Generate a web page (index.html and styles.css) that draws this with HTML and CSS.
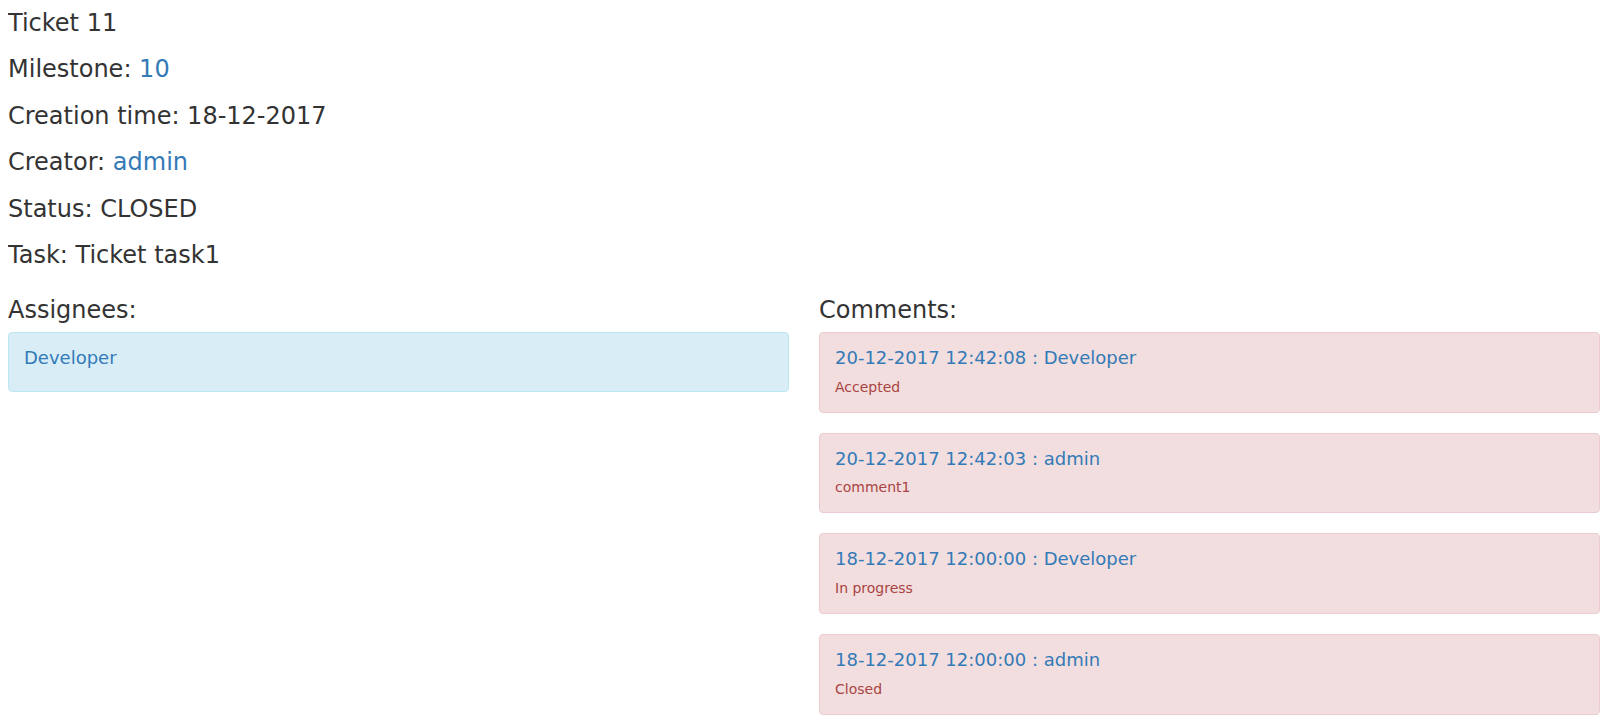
FILE: index.html
```html
<!DOCTYPE html>
<html lang="en">
<head>
<meta charset="utf-8">
<title>Ticket 11</title>
<link rel="stylesheet" href="styles.css">
</head>
<body>
<div class="page">
  <h3 class="field first">Ticket 11</h3>
  <h3 class="field">Milestone: <a href="#">10</a></h3>
  <h3 class="field">Creation time: 18-12-2017</h3>
  <h3 class="field">Creator: <a href="#">admin</a></h3>
  <h3 class="field">Status: CLOSED</h3>
  <h3 class="field">Task: Ticket task1</h3>

  <div class="columns">
    <div class="col">
      <h3 class="field col-title">Assignees:</h3>
      <div class="alert alert-info">
        <h4 class="alert-title assignee"><a href="#">Developer</a></h4>
      </div>
    </div>
    <div class="col">
      <h3 class="field col-title">Comments:</h3>
      <div class="alert alert-danger">
        <h4 class="alert-title"><a href="#">20-12-2017 12:42:08 : Developer</a></h4>
        <div class="alert-body">Accepted</div>
      </div>
      <div class="alert alert-danger">
        <h4 class="alert-title"><a href="#">20-12-2017 12:42:03 : admin</a></h4>
        <div class="alert-body">comment1</div>
      </div>
      <div class="alert alert-danger">
        <h4 class="alert-title"><a href="#">18-12-2017 12:00:00 : Developer</a></h4>
        <div class="alert-body">In progress</div>
      </div>
      <div class="alert alert-danger">
        <h4 class="alert-title"><a href="#">18-12-2017 12:00:00 : admin</a></h4>
        <div class="alert-body">Closed</div>
      </div>
    </div>
  </div>
</div>
</body>
</html>
```

FILE: styles.css
```css
html, body {
  background: #fff;
}
body {
  margin: 8px;
  font-family: "DejaVu Sans", sans-serif;
  font-size: 14px;
  line-height: 1.42857;
  color: #333;
}
a {
  color: #337ab7;
  text-decoration: none;
}
.field {
  font-size: 24px;
  font-weight: 500;
  line-height: 1.1;
  margin: 20px 0 10px 0;
}
.field.first {
  margin-top: 2px;
}
.field.col-title {
  margin-top: 19px;
  margin-bottom: 8px;
}
.columns {
  display: flex;
  gap: 30px;
}
.col {
  flex: 1 1 0;
  min-width: 0;
}
.alert {
  padding: 15px;
  margin-bottom: 20px;
  border: 1px solid transparent;
  border-radius: 4px;
}
.alert-info {
  background: #d9edf7;
  border-color: #bce8f1;
  color: #31708f;
}
.alert-danger {
  background: #f2dede;
  border-color: #ebccd1;
  color: #a94442;
}
.alert-title {
  font-size: 18px;
  font-weight: 500;
  line-height: 1.1;
  margin: 0 0 9px 0;
}
.alert-title.assignee {
  margin-bottom: 8px;
}
.alert-body {
  font-size: 14px;
  line-height: 20px;
}
```
